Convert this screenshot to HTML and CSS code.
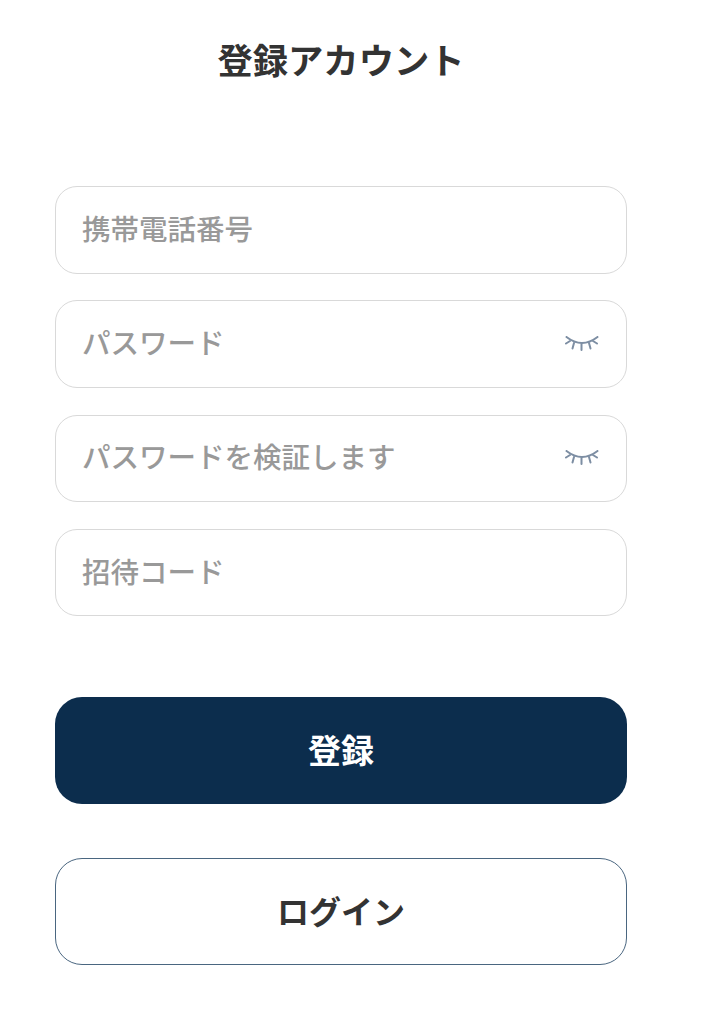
FILE: index.html
```html
<!DOCTYPE html>
<html lang="ja">
<head>
<meta charset="utf-8">
<title>登録アカウント</title>
<link rel="stylesheet" href="styles.css">
</head>
<body>
<main class="page">
  <h1 class="title">登録アカウント</h1>
  <form class="fields">
    <div class="field"><span class="placeholder">携帯電話番号</span></div>
    <div class="field"><span class="placeholder">パスワード</span>
      <svg class="eye" viewBox="0 0 34 15" fill="none" stroke="#7d8ea3" stroke-width="2" stroke-linecap="round"><path d="M1.500 1Q17 13 32.500 1"/><path d="M1 7.500L5 5M7.500 12.500L9 7M16.500 14V8M25.500 12.500L24 7M32 7.500L28 5"/></svg>
    </div>
    <div class="field"><span class="placeholder">パスワードを検証します</span>
      <svg class="eye" viewBox="0 0 34 15" fill="none" stroke="#7d8ea3" stroke-width="2" stroke-linecap="round"><path d="M1.500 1Q17 13 32.500 1"/><path d="M1 7.500L5 5M7.500 12.500L9 7M16.500 14V8M25.500 12.500L24 7M32 7.500L28 5"/></svg>
    </div>
    <div class="field"><span class="placeholder">招待コード</span></div>
  </form>
  <div class="actions">
    <button class="btn primary" type="button">登録</button>
    <button class="btn secondary" type="button">ログイン</button>
  </div>
</main>
</body>
</html>
```
FILE: styles.css
```css
* { box-sizing: border-box; }
html, body { margin: 0; padding: 0; background: #fff; }
body { font-family: "Noto Sans CJK JP", "Noto Sans", sans-serif; }
.page { width: 704px; height: 1024px; padding: 34px 77px 0 55px; display: flex; flex-direction: column; }
.title { margin: 0; height: 50px; font-size: 35.300px; line-height: 50px; font-weight: 700; color: #333; text-align: center; }
.fields { margin-top: 102px; display: flex; flex-direction: column; gap: 26.800px; }
.field { height: 87.500px; border: 1px solid #d9d9d9; border-radius: 22px; padding: 0 26px; display: flex; align-items: center; justify-content: space-between; }
.placeholder { font-size: 28.500px; font-weight: 500; color: #999; line-height: 40px; position: relative; top: -2px; }
.eye { width: 34px; height: 15px; margin-right: 1px; margin-top: -1px; }
.actions { margin-top: 81px; display: flex; flex-direction: column; gap: 54px; }
.btn { height: 107px; width: 100%; border-radius: 27px; font-family: inherit; font-size: 32px; font-weight: 700; padding: 0 0 4px; }
.primary { background: #0c2d4d; color: #fff; border: none; font-size: 33px; }
.secondary { background: #fff; color: #333; border: 1px solid #4a6680; }
```
